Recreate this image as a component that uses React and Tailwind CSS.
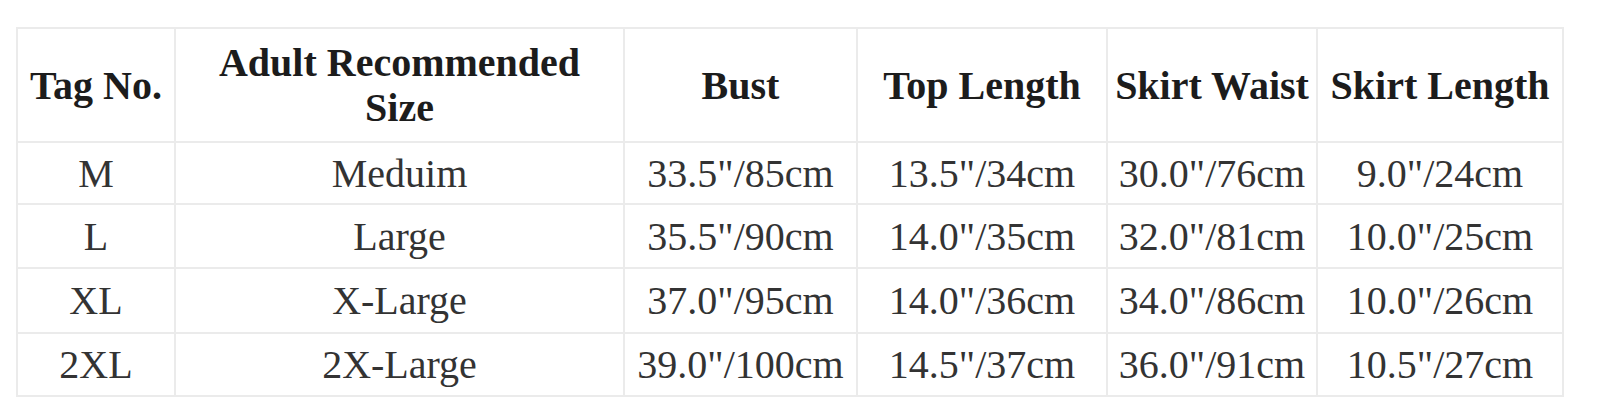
const headers = ['Tag No.', 'Adult Recommended Size', 'Bust', 'Top Length', 'Skirt Waist', 'Skirt Length']

const rows = [
  { h: 'h-[62px]', cells: ['M', 'Meduim', '33.5"/85cm', '13.5"/34cm', '30.0"/76cm', '9.0"/24cm'] },
  { h: 'h-[64px]', cells: ['L', 'Large', '35.5"/90cm', '14.0"/35cm', '32.0"/81cm', '10.0"/25cm'] },
  { h: 'h-[65px]', cells: ['XL', 'X-Large', '37.0"/95cm', '14.0"/36cm', '34.0"/86cm', '10.0"/26cm'] },
  { h: 'h-[63px]', cells: ['2XL', '2X-Large', '39.0"/100cm', '14.5"/37cm', '36.0"/91cm', '10.5"/27cm'] },
]

const widths = ['w-[158px]', 'w-[449px]', 'w-[233px]', 'w-[250px]', 'w-[210px]', 'w-[246px]']

export default function App() {
  return (
    <div className="min-h-[419px] bg-white pl-[16px] pt-[27px] font-['Liberation_Serif','Times_New_Roman',serif]">
      <table className="w-[1547px] table-fixed border-collapse border-2 border-[#ebebeb] text-center">
        <colgroup>
          {widths.map((w, i) => (
            <col key={i} className={w} />
          ))}
        </colgroup>
        <thead>
          <tr className="h-[114px]">
            {headers.map((label, i) => (
              <th
                key={label}
                className={[
                  'border-2 border-[#ebebeb] p-0 text-[40px] leading-[45px] font-bold text-[#1c1c1c]',
                  i === 1 ? 'px-8' : 'whitespace-nowrap',
                ].join(' ')}
              >
                {label}
              </th>
            ))}
          </tr>
        </thead>
        <tbody>
          {rows.map((r) => (
            <tr key={r.cells[0]} className={r.h}>
              {r.cells.map((v, i) => (
                <td
                  key={i}
                  className="border-2 border-[#ebebeb] p-0 text-[40px] leading-[45px] whitespace-nowrap text-[#333333]"
                >
                  {v}
                </td>
              ))}
            </tr>
          ))}
        </tbody>
      </table>
    </div>
  )
}
